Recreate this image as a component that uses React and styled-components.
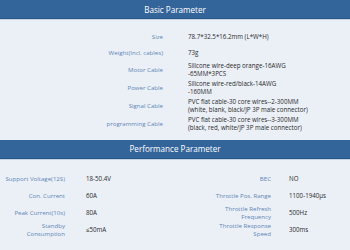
import React from "react";
import styled, { createGlobalStyle } from "styled-components";

const Global = createGlobalStyle`
  html, body { margin: 0; padding: 0; background: #ebf0f7; }
  body { font-family: "Open Sans", "Noto Sans", sans-serif; }
`;

const Page = styled.div`
  width: 350px;
  height: 250px;
  background: #ebf0f7;
  overflow: hidden;
`;

const Header = styled.div`
  height: 18px;
  background: #34659a;
  color: #ffffff;
  font-size: 8.1px;
  display: flex;
  align-items: center;
  justify-content: center;
  border-bottom: 1px solid #285686;
  box-shadow: 0 1px 0 #c3d1e3;
  margin-top: ${(p) => p.$mt || 0}px;
`;

const BasicTable = styled.div`
  display: grid;
  grid-template-columns: 163px 1fr;
  row-gap: 1px;
  padding-top: 10.5px;
`;

const Label = styled.div`
  color: #5d86b6;
  font-size: 6.1px;
  line-height: 8.5px;
  text-align: right;
  display: flex;
  align-items: center;
  justify-content: flex-end;
  height: ${(p) => p.$h}px;
`;

const Value = styled.div`
  color: #2a2a2a;
  font-size: 6.2px;
  line-height: 8.5px;
  padding-left: ${(p) => p.$pl}px;
  display: flex;
  align-items: center;
  white-space: nowrap;
  height: ${(p) => p.$h}px;
`;

const PerfTable = styled.div`
  display: grid;
  grid-template-columns: 60px 150px 56px 1fr;
  padding-left: 5px;
  padding-top: 12px;
`;

const basic = [
  ["Size", "78.7*32.5*16.2mm  (L*W*H)", 15],
  ["Weight(Incl. cables)", "73g", 15],
  ["Motor Cable", ["Silicone wire-deep orange-16AWG", "-65MM*3PCS"], 17],
  ["Power Cable", ["Silicone wire-red/black-14AWG", "-160MM"], 17],
  ["Signal Cable", ["PVC flat cable-30 core wires--2-300MM", "(white, blank, black/JP 3P male connector)"], 17],
  ["programming Cable", ["PVC flat cable-30 core wires--3-300MM", "(black, red, white/JP 3P male connector)"], 17],
];

const perf = [
  [["Support Voltage(12S)"], "18-50.4V", ["BEC"], "NO"],
  [["Con. Current"], "60A", ["Throttle Pos. Range"], "1100-1940μs"],
  [["Peak Current(10s)"], "80A", ["Throttle Refresh", "Frequency"], "500Hz"],
  [["Standby", "Consumption"], "≤50mA", ["Throttle Response", "Speed"], "300ms"],
];

const Lines = ({ lines }) => (
  <div>
    {lines.map((l, i) => (
      <React.Fragment key={i}>
        {i > 0 && <br />}
        {l}
      </React.Fragment>
    ))}
  </div>
);

export default function App() {
  return (
    <Page>
      <Global />
      <Header>Basic Parameter</Header>
      <BasicTable>
        {basic.map(([l, v, h]) => (
          <React.Fragment key={l}>
            <Label $h={h}>{l}</Label>
            <Value $h={h} $pl={25}>
              <Lines lines={Array.isArray(v) ? v : [v]} />
            </Value>
          </React.Fragment>
        ))}
      </BasicTable>
      <Header $mt={7}>Performance Parameter</Header>
      <PerfTable>
        {perf.map(([l1, v1, l2, v2], i) => (
          <React.Fragment key={i}>
            <Label $h={17}>
              <Lines lines={l1} />
            </Label>
            <Value $h={17} $pl={21}>{v1}</Value>
            <Label $h={17}>
              <Lines lines={l2} />
            </Label>
            <Value $h={17} $pl={18}>{v2}</Value>
          </React.Fragment>
        ))}
      </PerfTable>
    </Page>
  );
}
